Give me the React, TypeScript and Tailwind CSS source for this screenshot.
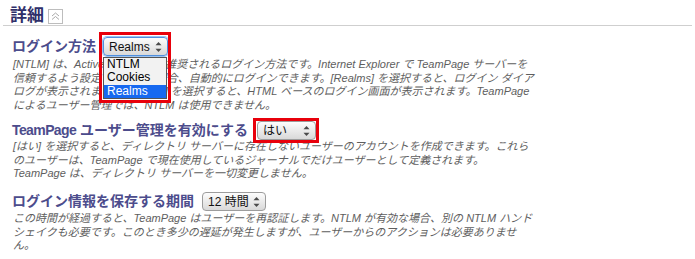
import React from "react";

const Arrows = () => (
  <svg width="7" height="12" viewBox="0 0 7 12" className="shrink-0">
    <path d="M0.5 4.2 L3.5 1 L6.5 4.2 Z" fill="#4a4a4a" />
    <path d="M0.5 7.8 L3.5 11 L6.5 7.8 Z" fill="#4a4a4a" />
  </svg>
);

function Select({
  label,
  className,
  focus,
}: {
  label: string;
  className: string;
  focus?: boolean;
}) {
  return (
    <div
      className={
        "relative h-[19px] shrink-0 rounded-[4px] flex items-center justify-between pl-[5px] pr-[5px] bg-gradient-to-b from-[#fdfdfd] to-[#d9d9d9] text-[12px] text-[#111] leading-none " +
        (focus
          ? "border border-[#4f8fde] shadow-[0_0_0_1px_#9cc3f0] "
          : "border border-[#9c9c9c] ") +
        className
      }
      style={{ fontFamily: '"Liberation Sans", "Noto Sans CJK JP", sans-serif' }}
    >
      <span>{label}</span>
      <Arrows />
    </div>
  );
}

const Heading = ({ children }: { children: React.ReactNode }) => (
  <div className="text-[14px] font-bold leading-[19px] text-[#4c4c8c] whitespace-nowrap">
    {children}
  </div>
);

const Desc = ({ lines, className }: { lines: string[]; className: string }) => (
  <div
    className={
      "pl-[1px] text-[11px] italic leading-[13.5px] text-[#5e5e5e] " + className
    }
  >
    {lines.map((l, i) => (
      <div key={i} className="whitespace-nowrap">
        {l}
      </div>
    ))}
  </div>
);

export default function App() {
  return (
    <div
      className="w-[695px] h-[259px] bg-white overflow-hidden"
      style={{ fontFamily: '"Liberation Sans", "Noto Sans CJK JP", sans-serif' }}
    >
      <div className="flex items-center pl-[10px] pt-[6px] h-[25px]">
        <span className="text-[17px] font-bold leading-[19px] text-[#2f2f6a]">詳細</span>
        <svg width="15" height="15" viewBox="0 0 15 15" className="ml-[4px] mt-[2px]">
          <rect x="0.5" y="0.5" width="14" height="14" fill="#fff" stroke="#bdbdbd" />
          <path d="M4 7 L7.5 4 L11 7" fill="none" stroke="#a9a9a9" strokeWidth="1" />
          <path d="M4 10.5 L7.5 7.5 L11 10.5" fill="none" stroke="#a9a9a9" strokeWidth="1" />
        </svg>
      </div>
      <div className="mx-[3px] h-px bg-[#cfcfcf]" />

      <div className="pl-[12px]">
        {/* Section 1 */}
        <div className="mt-[11px] flex items-center gap-[7px] h-[19px]">
          <Heading>ログイン方法</Heading>
          <div className="relative">
            <Select label="Realms" className="w-[65px]" focus />
            <div className="absolute left-0 top-[20px] w-[64px] h-[42px] border border-[#555] bg-[#f2f2f2] text-[12px] leading-[13.3px] text-black z-10">
              <div className="pl-[3px]">NTLM</div>
              <div className="pl-[3px]">Cookies</div>
              <div className="pl-[3px] bg-[#1769f0] text-white">Realms</div>
            </div>
            <div className="absolute left-[-4px] top-[-5px] w-[72px] h-[71px] border-[3px] border-[#e8000b] z-20 pointer-events-none" />
          </div>
        </div>
        <Desc
          className="mt-[2px]"
          lines={[
            "[NTLM] は、Active Directory で推奨されるログイン方法です。Internet Explorer で TeamPage サーバーを",
            "信頼するよう設定されている場合、自動的にログインできます。[Realms] を選択すると、ログイン ダイア",
            "ログが表示されます。[Cookies] を選択すると、HTML ベースのログイン画面が表示されます。TeamPage",
            "によるユーザー管理では、NTLM は使用できません。",
          ]}
        />

        {/* Section 2 */}
        <div className="mt-[9px] flex items-center gap-[9px] h-[19px]">
          <Heading>
            <span className="tracking-[-0.6px]">TeamPage</span> ユーザー管理を有効にする
          </Heading>
          <div className="relative">
            <Select label="はい" className="w-[59px]" />
            <div className="absolute left-[-4px] top-[-3px] w-[66px] h-[25px] border-[3px] border-[#e8000b] pointer-events-none" />
          </div>
        </div>
        <Desc
          className="mt-0"
          lines={[
            "[はい] を選択すると、ディレクトリ サーバーに存在しないユーザーのアカウントを作成できます。これら",
            "のユーザーは、TeamPage で現在使用しているジャーナルでだけユーザーとして定義されます。",
            "TeamPage は、ディレクトリ サーバーを一切変更しません。",
          ]}
        />

        {/* Section 3 */}
        <div className="mt-[11.5px] flex items-center gap-[8px] h-[19px]">
          <Heading>ログイン情報を保存する期間</Heading>
          <Select label="12 時間" className="w-[64px]" />
        </div>
        <Desc
          className="mt-[1px]"
          lines={[
            "この時間が経過すると、TeamPage はユーザーを再認証します。NTLM が有効な場合、別の NTLM ハンド",
            "シェイクも必要です。このとき多少の遅延が発生しますが、ユーザーからのアクションは必要ありませ",
            "ん。",
          ]}
        />
      </div>
    </div>
  );
}
